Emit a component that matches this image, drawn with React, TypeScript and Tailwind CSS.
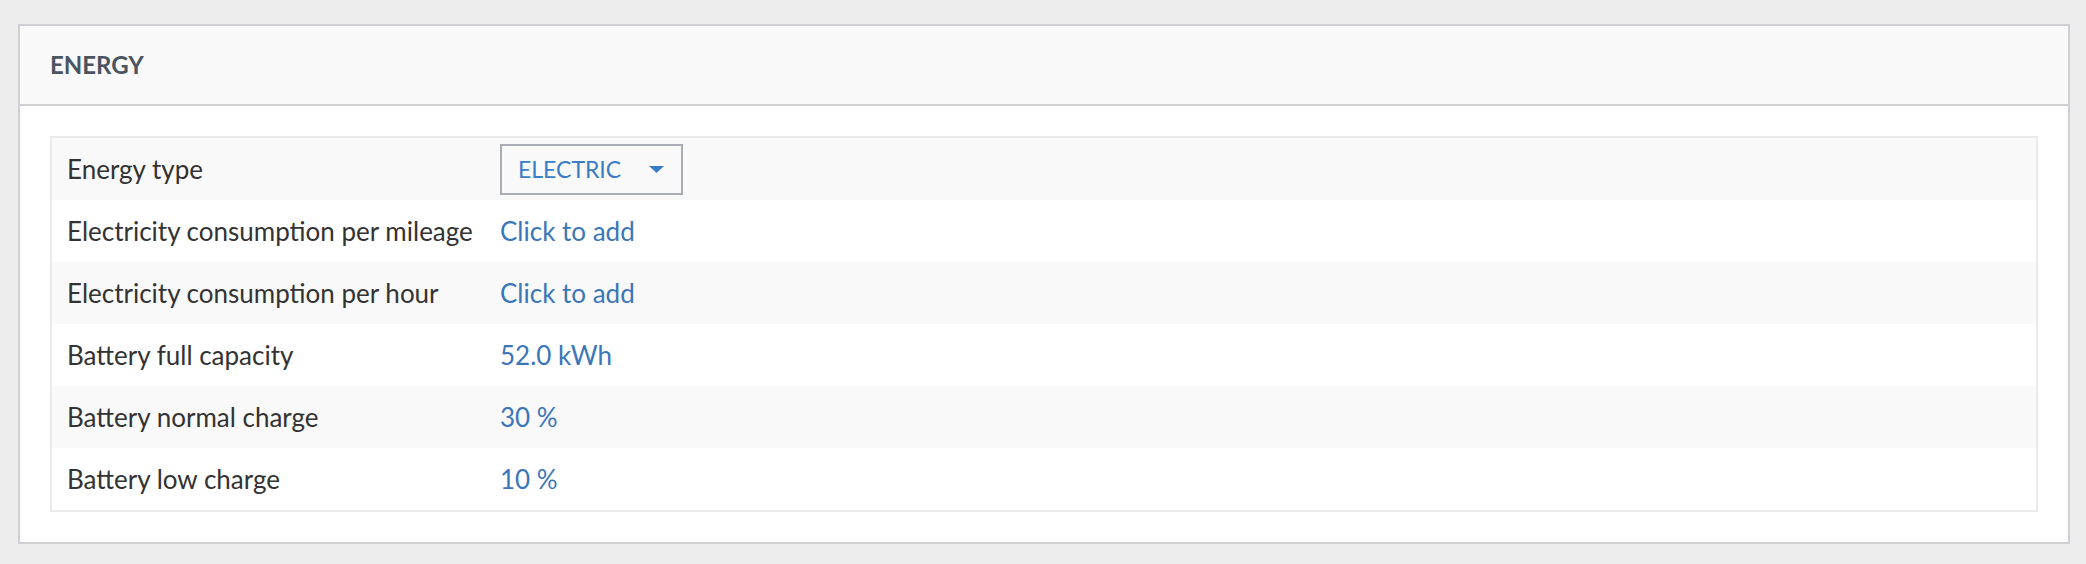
import React from "react";

const rows: { label: string; value?: string; dropdown?: boolean }[] = [
  { label: "Energy type", dropdown: true },
  { label: "Electricity consumption per mileage", value: "Click to add" },
  { label: "Electricity consumption per hour", value: "Click to add" },
  { label: "Battery full capacity", value: "52.0 kWh" },
  { label: "Battery normal charge", value: "30 %" },
  { label: "Battery low charge", value: "10 %" },
];

export default function App() {
  return (
    <div
      className="w-[2086px] h-[564px] bg-[#ededed] pt-[24px] pl-[18px] pr-[16px] pb-[18px]"
      style={{ fontFamily: "Lato, 'Noto Sans', sans-serif" }}
    >
      <div className="border-2 border-[#cfcfd4] bg-white">
        <div className="h-[80px] bg-[#f9f9f9] border-b-2 border-[#cfcfd4] flex items-center px-[30px]">
          <span className="text-[24px] font-bold text-[#4a5561]">ENERGY</span>
        </div>
        <div className="p-[30px]">
          <div className="border-2 border-[#ebebeb]">
            {rows.map((r, i) => (
              <div
                key={r.label}
                className={`flex items-center h-[62px] ${i % 2 === 0 ? "bg-[#f9f9f9]" : "bg-white"}`}
              >
                <div className="w-[448px] pl-[15px] text-[26px] text-[#333333] shrink-0">{r.label}</div>
                {r.dropdown ? (
                  <div className="w-[183px] h-[51px] border-2 border-[#a9adb3] flex items-center justify-between pl-[16px] pr-[17px]">
                    <span className="text-[23px] text-[#3a7dc6]">ELECTRIC</span>
                    <svg width="15" height="7" viewBox="0 0 15 7">
                      <path d="M0 0 L15 0 L7.5 7 Z" fill="#3a7dc6" />
                    </svg>
                  </div>
                ) : (
                  <div className="text-[26px] text-[#3b76b9]">{r.value}</div>
                )}
              </div>
            ))}
          </div>
        </div>
      </div>
    </div>
  );
}
